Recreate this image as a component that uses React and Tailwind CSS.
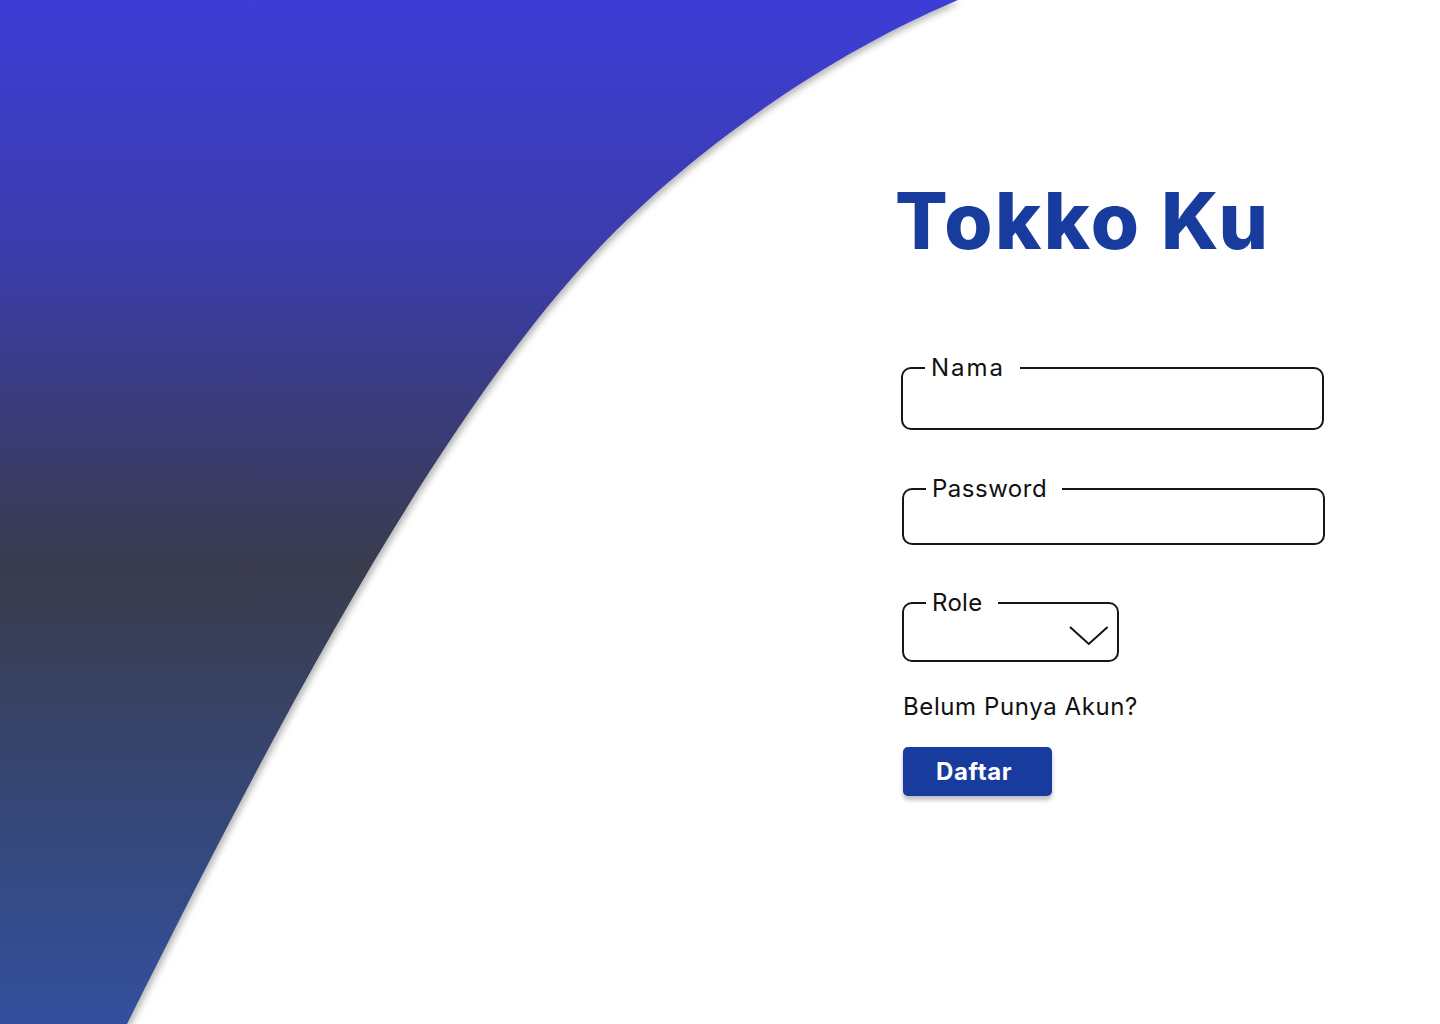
import React from "react";

function Chevron() {
  return (
    <svg width="40" height="20" viewBox="0 0 40 20" fill="none">
      <polyline points="1,1 19.8,18 38.6,1" stroke="#111" strokeWidth="2" strokeLinejoin="miter" />
    </svg>
  );
}

function Field({ label, className, children, labelClass }) {
  return (
    <fieldset className={"rounded-[10px] border-2 border-[#161616] " + className}>
      <legend className={"ml-[22px] pl-[6px] pr-[15px] text-[24px] leading-[26px] text-[#111] " + labelClass}>{label}</legend>
      {children}
    </fieldset>
  );
}

export default function App() {
  return (
    <div
      className="relative flex h-[1024px] w-full overflow-hidden bg-white"
      style={{ fontFamily: "Inter, 'Noto Sans', sans-serif" }}
    >
      <svg
        className="absolute left-0 top-0 drop-shadow-[3px_3px_3px_rgba(0,0,0,0.28)]"
        width="1000"
        height="1024"
        viewBox="0 0 1000 1024"
      >
        <defs>
          <linearGradient id="bg" x1="0" y1="0" x2="0" y2="1">
            <stop offset="0" stopColor="#3d3dd7" />
            <stop offset="0.25" stopColor="#3b3caa" />
            <stop offset="0.555" stopColor="#393c4c" />
            <stop offset="1" stopColor="#33509e" />
          </linearGradient>
        </defs>
        <path
          d="M0,0 L958,0 C820,58 685.5,157 600,247 C429,427 257,764 127,1024 L0,1024 Z"
          fill="url(#bg)"
        />
      </svg>

      <div className="relative ml-[895px] flex w-[440px] flex-col pt-[182px]">
        <h1 className="text-[78px] font-extrabold leading-[78px] tracking-[2.5px] text-[#183c9e]">Tokko Ku</h1>

        <Field label="Nama" labelClass="tracking-[2px]" className="ml-[6px] mt-[95px] h-[75px] w-[423px]" />
        <Field label="Password" labelClass="tracking-[0.5px]" className="ml-[7px] mt-[46px] h-[69px] w-[423px]" />
        <Field label="Role" labelClass="tracking-[0.3px]" className="ml-[7px] mt-[45px] h-[72px] w-[217px]">
          <div className="flex justify-end pr-[8px] pt-[10px]">
            <Chevron />
          </div>
        </Field>

        <p className="ml-[8px] mt-[30px] text-[24px] leading-[30px] tracking-[0.6px] text-[#111]">Belum Punya Akun?</p>

        <button className="ml-[8px] mt-[25px] flex h-[49px] w-[149px] items-center rounded-[5px] bg-[#183c9e] pl-[33px] text-[24px] font-bold tracking-[0.6px] text-white shadow-[0_4px_4px_rgba(0,0,0,0.25)]">
          Daftar
        </button>
      </div>
    </div>
  );
}
